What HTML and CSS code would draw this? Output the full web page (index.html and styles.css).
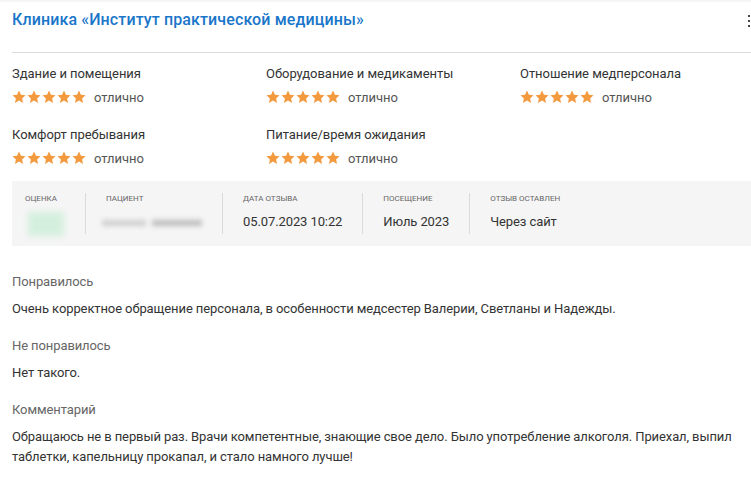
FILE: index.html
```html
<!DOCTYPE html>
<html lang="ru">
<head>
<meta charset="utf-8">
<link rel="stylesheet" href="styles.css">
</head>
<body>
<svg class="defs" width="0" height="0" aria-hidden="true">
  <defs>
    <path id="star" d="M7 0.6l1.95 4.2 4.55 0.5-3.4 3.1 0.95 4.5L7 10.6l-4.05 2.3 0.95-4.5-3.4-3.1 4.55-0.5z"/>
  </defs>
</svg>
<div class="card">
  <div class="head">
    <h1 class="title">Клиника «Институт практической медицины»</h1>
    <div class="kebab"><i></i><i></i><i></i></div>
  </div>

  <div class="ratings">
    <div class="rating">
      <div class="r-label">Здание и помещения</div>
      <div class="r-stars"><span class="stars"><svg viewBox="0 0 14 14"><use href="#star"/></svg><svg viewBox="0 0 14 14"><use href="#star"/></svg><svg viewBox="0 0 14 14"><use href="#star"/></svg><svg viewBox="0 0 14 14"><use href="#star"/></svg><svg viewBox="0 0 14 14"><use href="#star"/></svg></span><span class="r-word">отлично</span></div>
    </div>
    <div class="rating">
      <div class="r-label">Оборудование и медикаменты</div>
      <div class="r-stars"><span class="stars"><svg viewBox="0 0 14 14"><use href="#star"/></svg><svg viewBox="0 0 14 14"><use href="#star"/></svg><svg viewBox="0 0 14 14"><use href="#star"/></svg><svg viewBox="0 0 14 14"><use href="#star"/></svg><svg viewBox="0 0 14 14"><use href="#star"/></svg></span><span class="r-word">отлично</span></div>
    </div>
    <div class="rating">
      <div class="r-label">Отношение медперсонала</div>
      <div class="r-stars"><span class="stars"><svg viewBox="0 0 14 14"><use href="#star"/></svg><svg viewBox="0 0 14 14"><use href="#star"/></svg><svg viewBox="0 0 14 14"><use href="#star"/></svg><svg viewBox="0 0 14 14"><use href="#star"/></svg><svg viewBox="0 0 14 14"><use href="#star"/></svg></span><span class="r-word">отлично</span></div>
    </div>
    <div class="rating">
      <div class="r-label">Комфорт пребывания</div>
      <div class="r-stars"><span class="stars"><svg viewBox="0 0 14 14"><use href="#star"/></svg><svg viewBox="0 0 14 14"><use href="#star"/></svg><svg viewBox="0 0 14 14"><use href="#star"/></svg><svg viewBox="0 0 14 14"><use href="#star"/></svg><svg viewBox="0 0 14 14"><use href="#star"/></svg></span><span class="r-word">отлично</span></div>
    </div>
    <div class="rating">
      <div class="r-label">Питание/время ожидания</div>
      <div class="r-stars"><span class="stars"><svg viewBox="0 0 14 14"><use href="#star"/></svg><svg viewBox="0 0 14 14"><use href="#star"/></svg><svg viewBox="0 0 14 14"><use href="#star"/></svg><svg viewBox="0 0 14 14"><use href="#star"/></svg><svg viewBox="0 0 14 14"><use href="#star"/></svg></span><span class="r-word">отлично</span></div>
    </div>
  </div>

  <div class="info">
    <div class="col col-first">
      <div class="c-label">Оценка</div>
      <div class="c-val"><div class="blur-score"></div></div>
    </div>
    <div class="col">
      <div class="c-label">Пациент</div>
      <div class="c-val"><span class="blur-name a"></span><span class="blur-name b"></span></div>
    </div>
    <div class="col">
      <div class="c-label">Дата отзыва</div>
      <div class="c-val">05.07.2023 10:22</div>
    </div>
    <div class="col">
      <div class="c-label">Посещение</div>
      <div class="c-val">Июль 2023</div>
    </div>
    <div class="col col-last">
      <div class="c-label">Отзыв оставлен</div>
      <div class="c-val">Через сайт</div>
    </div>
  </div>

  <div class="section">
    <div class="s-label">Понравилось</div>
    <div class="s-text">Очень корректное обращение персонала, в особенности медсестер Валерии, Светланы и Надежды.</div>
  </div>
  <div class="section">
    <div class="s-label">Не понравилось</div>
    <div class="s-text">Нет такого.</div>
  </div>
  <div class="section">
    <div class="s-label">Комментарий</div>
    <div class="s-text">Обращаюсь не в первый раз. Врачи компетентные, знающие свое дело. Было употребление алкоголя. Приехал, выпил таблетки, капельницу прокапал, и стало намного лучше!</div>
  </div>
</div>
</body>
</html>
```

FILE: styles.css
```css
html, body {
  margin: 0;
  padding: 0;
  background: #fff;
  overflow: hidden;
}
body {
  font-family: Roboto, "Noto Sans", "Liberation Sans", sans-serif;
  color: #333;
  width: 751px;
}
.defs {
  position: absolute;
  width: 0;
  height: 0;
}
.card {
  padding-left: 12px;
  box-shadow: inset 0 3px 3px -2px rgba(0, 0, 0, 0.07);
}
.head {
  height: 52px;
  border-bottom: 1px solid #dcdcdc;
  display: flex;
  justify-content: space-between;
  align-items: flex-start;
}
.title {
  margin: 0;
  padding-top: 10px;
  font-size: 16px;
  line-height: 20px;
  font-weight: 500;
  letter-spacing: 0.12px;
  color: #1a76c9;
}
.kebab {
  width: 3px;
  padding-top: 15px;
  display: flex;
  flex-direction: column;
  gap: 3px;
}
.kebab i {
  display: block;
  width: 2px;
  height: 2px;
  background: #444;
}
.ratings {
  display: grid;
  grid-template-columns: 254px 254px 1fr;
  row-gap: 20px;
  margin-top: 12px;
}
.r-label {
  font-size: 13px;
  line-height: 18px;
  color: #333;
  letter-spacing: -0.05px;
}
.r-stars {
  margin-top: 5px;
  display: flex;
  align-items: center;
  height: 18px;
}
.stars {
  display: flex;
  gap: 1px;
  fill: #f39a3f;
}
.stars svg {
  width: 14px;
  height: 14px;
  display: block;
}
.r-word {
  margin-left: 8px;
  font-size: 13px;
  color: #555;
}
.info {
  margin-top: 14px;
  background: #f5f5f5;
  padding: 12px 0;
  display: flex;
}
.col {
  padding: 0 20px 3px;
  border-left: 1px solid #dadada;
}
.col-first {
  border-left: none;
  padding-left: 13px;
  padding-right: 17px;
  width: 43px;
}
.c-label {
  font-size: 8px;
  line-height: 12px;
  text-transform: uppercase;
  color: #666;
  white-space: nowrap;
}
.c-val {
  margin-top: 8px;
  font-size: 13px;
  line-height: 18px;
  letter-spacing: -0.1px;
  color: #333;
  height: 18px;
  white-space: nowrap;
}
.blur-score {
  width: 36px;
  height: 24px;
  margin: -1px 0 0 3px;
  background: #d4efdd;
  filter: blur(3px);
}
.blur-name {
  display: inline-block;
  height: 6px;
  vertical-align: middle;
  filter: blur(2.5px);
  background: #bdbdbd;
}
.blur-name.a {
  width: 44px;
  margin-left: -4px;
  background: #cfcfcf;
}
.blur-name.b {
  width: 50px;
  margin-left: 6px;
}
.section {
  margin-top: 18px;
}
.info + .section {
  margin-top: 27px;
}
.s-label {
  font-size: 13px;
  line-height: 18px;
  color: #666;
  letter-spacing: -0.1px;
}
.s-text {
  margin-top: 8px;
  font-size: 13px;
  line-height: 20px;
  letter-spacing: -0.1px;
  color: #333;
}
```
